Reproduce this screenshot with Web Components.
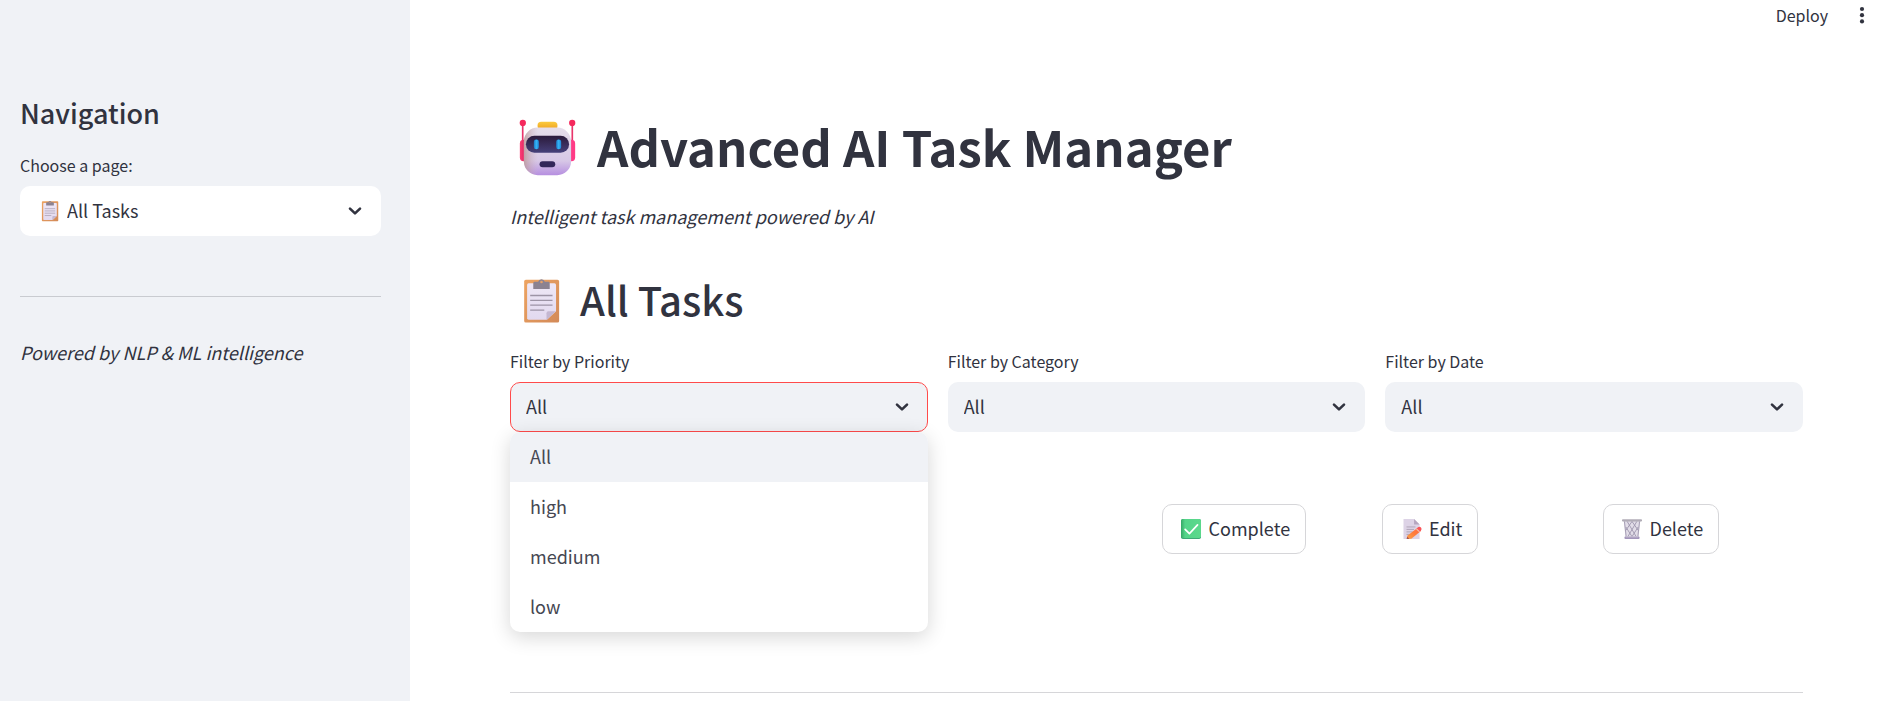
<!DOCTYPE html>
<html lang="en">
<head>
<meta charset="utf-8">
<title>Advanced AI Task Manager</title>
<style>
  body { margin: 0; background: #fff; color: #31333f; font-family: "Noto Sans CJK SC", "Noto Sans", sans-serif; font-size: 18px; line-height: 32px; }
</style>
</head>
<body>
<task-app></task-app>

<template id="tpl-app">
  <style>
    :host { display: flex; min-height: 100vh; }
    side-bar { flex: 0 0 410px; }
    .page { flex: 1; min-width: 0; }
    main { padding: 83px 98px 8px 100px; }
    h1, h2 { margin: 0; display: flex; align-items: center; }
    h1 { font-size: 49px; line-height: 66px; gap: 12px; font-weight: 700; }
    h2 { font-size: 40px; line-height: 54px; gap: 8px; margin-top: 40px; font-weight: 500; }
    h1 emoji-icon { --box: 75px; --size: 59px; padding-top: 2px; }
    h2 emoji-icon { --box: 62px; --size: 47px; padding-top: 2px; }
    .lead { margin: 21px 0 0; font-style: italic; }
    .filters { display: grid; grid-template-columns: repeat(3, minmax(0, 1fr)); gap: 20px; margin-top: 22px; }
    .actions { display: grid; grid-template-columns: 63fr 20fr 20fr 20fr; gap: 20px; margin-top: 72px; }
    hr { margin: 138px 0 0; border: 0; border-top: 1px solid #d6d6d9; }
  </style>
  <side-bar></side-bar>
  <div class="page">
    <top-bar></top-bar>
    <main>
      <h1><emoji-icon name="robot"></emoji-icon><span>Advanced AI Task Manager</span></h1>
      <p class="lead">Intelligent task management powered by AI</p>
      <h2><emoji-icon name="clipboard"></emoji-icon><span>All Tasks</span></h2>
      <div class="filters">
        <select-field label="Filter by Priority" options="All,high,medium,low" open></select-field>
        <select-field label="Filter by Category" options="All"></select-field>
        <select-field label="Filter by Date" options="All"></select-field>
      </div>
      <div class="actions">
        <span></span>
        <action-button icon="check">Complete</action-button>
        <action-button icon="memo">Edit</action-button>
        <action-button icon="bin">Delete</action-button>
      </div>
      <hr>
    </main>
  </div>
</template>

<template id="tpl-side">
  <style>
    :host { display: block; box-sizing: border-box; padding: 95px 29px 0 20px; background: #f0f2f6; }
    h2 { margin: 0 0 21px; font-size: 27px; line-height: 36px; font-weight: 500; }
    hr { margin: 60px 0 39px; border: 0; border-top: 1px solid #c9cbd0; }
    p { margin: 0; font-style: italic; }
    select-field { --field: #fff; }
  </style>
  <h2>Navigation</h2>
  <select-field label="Choose a page:" options="All Tasks" icon="clipboard"></select-field>
  <hr>
  <p>Powered by NLP &amp; ML intelligence</p>
</template>

<template id="tpl-top">
  <style>
    :host { display: flex; justify-content: flex-end; gap: 21px; height: 30px; padding-right: 26px; }
    button { border: 0; padding: 0; background: none; color: inherit; font: inherit; font-size: 16px; line-height: 30px; cursor: pointer; }
    .more { width: 26px; display: grid; place-items: center; }
    svg { display: block; }
  </style>
  <button type="button">Deploy</button>
  <button type="button" class="more" aria-label="Main menu">
    <svg width="6" height="18" viewBox="0 0 6 18" fill="#31333f"><circle cx="3" cy="3" r="2.1"/><circle cx="3" cy="9.2" r="2.1"/><circle cx="3" cy="15.4" r="2.1"/></svg>
  </button>
</template>

<template id="tpl-select">
  <style>
    :host { display: block; position: relative; }
    label { display: block; margin-bottom: 8px; font-size: 16px; line-height: 26px; }
    .box { display: grid; grid-template-columns: auto 1fr auto; align-items: center; height: 50px; }
    select { grid-area: 1 / 1 / 2 / 4; box-sizing: border-box; width: 100%; height: 50px; margin: 0; padding: 0 50px 2px 15px; appearance: none; border: 1px solid transparent; border-radius: 10px; background: var(--field, #f0f2f6); background-origin: border-box; color: inherit; font: inherit; outline: none; }
    emoji-icon, .chev { pointer-events: none; z-index: 1; }
    emoji-icon { grid-area: 1 / 1; margin-left: 16px; --box: 27px; --size: 22px; }
    .chev { grid-area: 1 / 3; margin-right: 19px; display: block; }
    :host([icon]) select { padding-left: 46px; }
    :host([open]) select { border-color: #ff4b4b; }
    ul { position: absolute; top: 100%; left: 0; right: 0; z-index: 2; margin: 0; padding: 0; list-style: none; background: #fff; border-radius: 10px; overflow: hidden; box-shadow: 0 5px 20px rgba(0, 0, 0, .16); }
    li { padding: 0 20px 2px; line-height: 48px; color: #454752; }
    li[aria-selected="true"] { background: #f0f2f6; }
  </style>
  <label for="control"></label>
  <div class="box">
    <select id="control"></select>
    <svg class="chev" width="14" height="10" viewBox="0 0 14 10" fill="none" stroke="#31333f" stroke-width="2.6" stroke-linecap="round" stroke-linejoin="round"><path d="M2 2.6 7 7.4 12 2.6"/></svg>
  </div>
</template>

<template id="tpl-button">
  <style>
    :host { display: block; }
    button { display: inline-flex; align-items: center; gap: 4px; box-sizing: border-box; height: 50px; padding: 0 15px; border: 1px solid #d6d6d9; border-radius: 10px; background: #fff; color: inherit; font: inherit; line-height: 30px; white-space: nowrap; cursor: pointer; vertical-align: top; }
    span { padding-bottom: 2px; }
    emoji-icon { --box: 27px; --size: 22px; }
  </style>
  <button type="button"><emoji-icon></emoji-icon><span><slot></slot></span></button>
</template>

<script>
const ART = {
  robot: `<defs>
    <linearGradient id="hd" x1="0" x2="0" y1="0" y2="1"><stop offset="0" stop-color="#e6deea"/><stop offset=".7" stop-color="#d7c7e6"/><stop offset="1" stop-color="#b68fe0"/></linearGradient>
    <linearGradient id="sd" x1="0" x2="1" y1="0" y2="0"><stop offset="0" stop-color="#b9938f" stop-opacity=".75"/><stop offset=".3" stop-color="#cdb4c4" stop-opacity="0"/></linearGradient>
    <linearGradient id="vs" x1="0" x2="0" y1="0" y2="1"><stop offset="0" stop-color="#2b1a3a"/><stop offset="1" stop-color="#46407a"/></linearGradient>
    <linearGradient id="ey" x1="0" x2="1" y1="0" y2="0"><stop offset="0" stop-color="#1c7ac8"/><stop offset=".5" stop-color="#35b4f5"/><stop offset="1" stop-color="#1f86d8"/></linearGradient>
    <linearGradient id="hat" x1="0" x2="0" y1="0" y2="1"><stop offset="0" stop-color="#fbcb3f"/><stop offset="1" stop-color="#eea01f"/></linearGradient>
    <linearGradient id="er" x1="0" x2="1" y1="0" y2="0"><stop offset="0" stop-color="#ff3f78"/><stop offset="1" stop-color="#cf1b53"/></linearGradient></defs>
    <path d="M2.1 3h.9v10h-.9zM29 3h.9v10H29z" fill="#e8356b"/>
    <circle cx="2.6" cy="2.7" r="1.7" fill="#f5285c"/><circle cx="29.4" cy="2.7" r="1.7" fill="#f5285c"/>
    <rect x="1" y="11.8" width="4" height="11.6" rx="2" fill="url(#er)"/><rect x="27" y="11.8" width="4" height="11.6" rx="2" fill="#ff3b86"/>
    <rect x="10.6" y="2" width="10.8" height="4.4" rx="2" fill="url(#hat)"/>
    <rect x="3.2" y="5.2" width="25.6" height="25.8" rx="7.5" fill="url(#hd)"/><rect x="3.2" y="5.2" width="25.6" height="25.8" rx="7.5" fill="url(#sd)"/>
    <rect x="4.3" y="9.6" width="23.4" height="9.2" rx="4.6" fill="url(#vs)"/>
    <rect x="8.6" y="11.6" width="2.7" height="5.4" rx="1.3" fill="url(#ey)"/><rect x="20.7" y="11.6" width="2.7" height="5.4" rx="1.3" fill="url(#ey)"/>
    <rect x="11.7" y="23.4" width="8.5" height="3.3" rx="1.65" fill="#33275a"/>`,
  clipboard: `<defs><linearGradient id="bd" x1="0" x2="1" y1="0" y2="1"><stop offset="0" stop-color="#eda462"/><stop offset="1" stop-color="#d38a58"/></linearGradient>
    <linearGradient id="pp" x1="0" x2="0" y1="0" y2="1"><stop offset="0" stop-color="#eee7f6"/><stop offset="1" stop-color="#e2d9ef"/></linearGradient></defs>
    <rect x="4.2" y="1.9" width="23.8" height="29.1" rx="1.1" fill="url(#bd)"/>
    <path d="M7.2 4.3h17.6q1.1 0 1.1 1.1v17.9l-6.2 5.8H7.2q-1 0-1-1V5.4q0-1.1 1-1.1z" fill="url(#pp)"/>
    <path d="M19.4 29.3v-4.7q0-1.3 1.3-1.3h5z" fill="#c4b7d1"/>
    <path d="M10.4 4.2q0-1 1-1h2.3a2.4 2.4 0 0 1 4.6 0h2.3q1 0 1 1v3.9H10.4z" fill="#8b8291"/><circle cx="16" cy="3.4" r=".9" fill="#e3a06b"/>
    <path d="M8.3 12.6h15.2M8.3 15.9h15.2M8.3 19.2h15.2M8.3 22.6h9.6" stroke="#9d94a6" stroke-width=".9"/>`,
  check: `<defs><linearGradient id="g" x1="0" x2="1" y1="0" y2="0"><stop offset="0" stop-color="#35a866"/><stop offset=".2" stop-color="#54d489"/><stop offset="1" stop-color="#5bd98c"/></linearGradient></defs>
    <rect x="1.5" y="1.5" width="29" height="29" rx="2.6" fill="#3fa977"/><rect x="1.5" y="1.5" width="29" height="27.5" rx="2.6" fill="url(#g)"/>
    <path d="M7.5 16.6 13.7 22.7 25.5 10" fill="none" stroke="#fff" stroke-width="2.5" stroke-linecap="round" stroke-linejoin="round"/>`,
  memo: `<defs><linearGradient id="pc" x1="1" x2="0" y1="0" y2="1"><stop offset="0" stop-color="#ff6848"/><stop offset=".5" stop-color="#ff7c3c"/><stop offset="1" stop-color="#f9a54a"/></linearGradient></defs>
    <path d="M3.6 1.5H19l8 8V30.5H3.6z" fill="#ddd3e6"/><path d="M19 1.5l8 8h-8z" fill="#b5a6bf"/>
    <path d="M8 13h13M8 16.6h11M8 20.2h9M8 23.8h5" stroke="#a79caf" stroke-width="1.2"/>
    <path d="M24.3 14.2 29 19 15 30l-6.6.6.7-4.7z" fill="url(#pc)"/><path d="m22.7 15.6 2-2.3q2.4-1.7 4.4.5 1.8 2.3 0 4.2l-2 2z" fill="#fa5358"/><path d="m21.8 16.4 4.6 4.5 1.3-1.1-4.7-4.6z" fill="#f6bea5"/><path d="m8.9 27.1-.7 3.6 4.2-.5z" fill="#a65052"/>`,
  bin: `<path d="M4 4.5h24L25.5 28h-19z" fill="#e2dde8"/>
    <path d="m5 5 2.5 22M27 5l-2.5 22M7 13l9 14M9 5l13 22M16 5l9 13M25 13l-9 14M23 5 10 27M16 5 7 18" stroke="#9d95ad" stroke-width="1.3" fill="none"/>
    <rect x="1.5" y="1.8" width="29" height="3.4" rx="1.4" fill="#aaa6b0"/><path d="M3 2.7h26" stroke="#d0ccd6" stroke-width=".8"/>
    <rect x="5" y="27" width="22" height="3.6" rx="1.4" fill="#a396bb"/><path d="M7 27.5h18" stroke="#d6d0dd" stroke-width=".9"/>`
};

const mount = (host, id) => {
  const root = host.attachShadow({ mode: "open" });
  root.append(document.getElementById(id).content.cloneNode(true));
  return root;
};

customElements.define("emoji-icon", class extends HTMLElement {
  static observedAttributes = ["name"];
  constructor() { super(); this.attachShadow({ mode: "open" }); }
  attributeChangedCallback() {
    this.shadowRoot.innerHTML = `<style>
      :host { display: inline-flex; flex: none; justify-content: center; width: var(--box); }
      svg { display: block; width: var(--size); height: var(--size); }
    </style><svg viewBox="0 0 32 32" aria-hidden="true">${ART[this.getAttribute("name")] || ""}</svg>`;
  }
});

customElements.define("action-button", class extends HTMLElement {
  constructor() {
    super();
    mount(this, "tpl-button").querySelector("emoji-icon").setAttribute("name", this.getAttribute("icon"));
  }
});

customElements.define("select-field", class extends HTMLElement {
  connectedCallback() {
    if (this.shadowRoot) return;
    const root = mount(this, "tpl-select");
    root.querySelector("label").textContent = this.getAttribute("label");
    const select = root.querySelector("select");
    const options = this.getAttribute("options").split(",");
    options.forEach(text => select.add(new Option(text)));
    if (this.hasAttribute("icon")) {
      const icon = document.createElement("emoji-icon");
      icon.setAttribute("name", this.getAttribute("icon"));
      select.after(icon);
    }
    if (this.hasAttribute("open")) {
      const list = document.createElement("ul");
      list.setAttribute("role", "listbox");
      options.forEach((text, i) => {
        const item = document.createElement("li");
        item.setAttribute("role", "option");
        item.setAttribute("aria-selected", String(i === 0));
        item.textContent = text;
        list.append(item);
      });
      root.append(list);
    }
  }
});

for (const [tag, id] of [["top-bar", "tpl-top"], ["side-bar", "tpl-side"], ["task-app", "tpl-app"]]) {
  customElements.define(tag, class extends HTMLElement {
    connectedCallback() { if (!this.shadowRoot) mount(this, id); }
  });
}
</script>
</body>
</html>
